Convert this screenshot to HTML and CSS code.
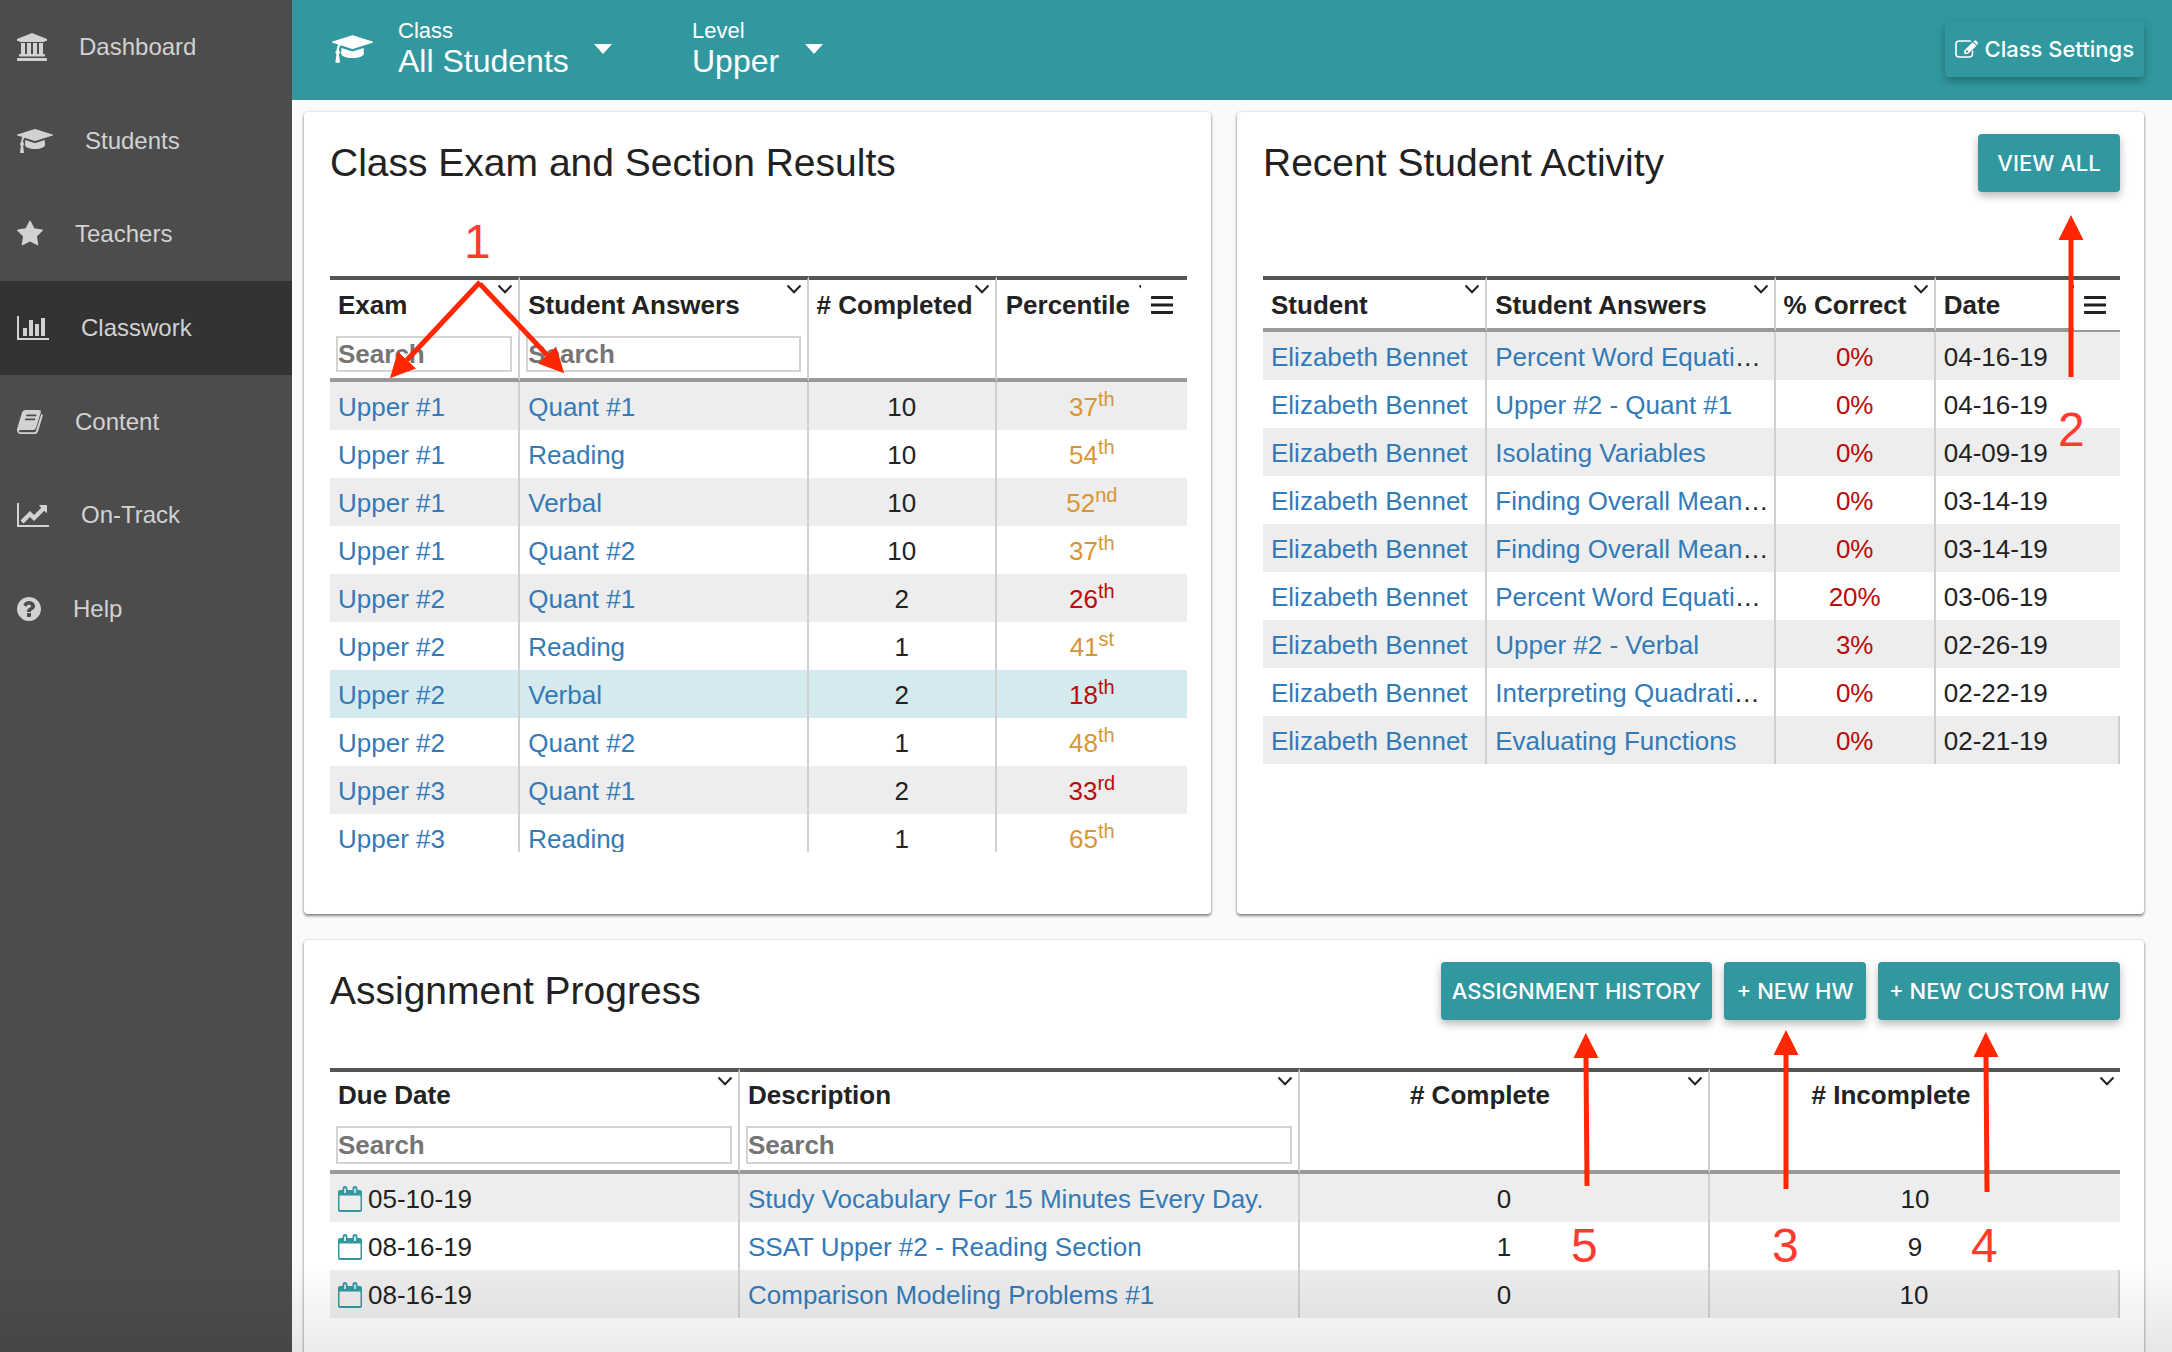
FILE: index.html
```
<!DOCTYPE html>
<html lang="en">
<head>
<meta charset="utf-8">
<title>Classwork</title>
<link rel="stylesheet" href="styles.css">
</head>
<body>
<svg class="sprite" aria-hidden="true">
  <symbol id="cap" viewBox="0 0 2304 1792"><path d="M1774 836l18 316q4 69-82 128t-235 93.5-323 34.5-323-34.5-235-93.5-82-128l18-316 574 181q22 7 48 7t48-7zm530-324q0 23-22 31l-1120 352q-4 1-10 1t-10-1l-652-206q-43 34-71 111.5t-34 178.5q63 36 63 109 0 69-58 107l58 433q2 14-8 25-9 11-24 11h-192q-15 0-24-11-10-11-8-25l58-433q-58-38-58-107 0-73 65-111 11-207 98-330l-333-104q-22-8-22-31t22-31l1120-352q4-1 10-1t10 1l1120 352q22 8 22 31z"/></symbol>
  <symbol id="chevron" viewBox="0 0 16 10"><path d="M1.500 1.500L8 8.200L14.500 1.500" fill="none" stroke="#222" stroke-width="2"/></symbol>
  <symbol id="caret" viewBox="0 0 18 10"><path d="M0 0h18l-9 10z"/></symbol>
  <symbol id="menu" viewBox="0 0 22 18"><path d="M1 0h20a1 1 0 0 1 1 1v2H0V1a1 1 0 0 1 1-1zM0 7.500h22v3H0zM0 15h22v2a1 1 0 0 1-1 1H1a1 1 0 0 1-1-1z"/></symbol>
  <symbol id="calendar" viewBox="0 0 24 26"><path fill-rule="evenodd" d="M2 4h2.500V2.500a2.500 2.500 0 0 1 5 0V4h5V2.500a2.500 2.500 0 0 1 5 0V4H22a2 2 0 0 1 2 2v18a2 2 0 0 1-2 2H2a2 2 0 0 1-2-2V6a2 2 0 0 1 2-2zM1.500 9.500v14.500h21V9.500zM6.200 2.500v4.500h1.600v-4.500zM16.200 2.500v4.500h1.600v-4.500z"/></symbol>
</svg>

<div class="app">
  <nav class="sidebar">
    <ul class="nav">
      <li><a class="nav-link" href="#"><svg width="30" height="28" viewBox="0 0 30 28"><path d="M15 0L30 6v2h-2q0 1-1.200 1H3.200Q2 9 2 8H0V6zM4 10h4v11h2V10h4v11h2V10h4v11h2V10h4v11h.8q1.200 0 1.200 1v1.500H2V22q0-1 1.200-1H4zM1.200 25h27.600q1.200 0 1.200 1v2H0v-2q0-1 1.200-1z"/></svg>Dashboard</a></li>
      <li><a class="nav-link" href="#"><svg width="36" height="28"><use href="#cap"/></svg>Students</a></li>
      <li><a class="nav-link" href="#"><svg width="26" height="28" viewBox="64 0 1664 1792"><path d="M1728 647q0 22-26 48l-363 354 86 500q1 7 1 20 0 21-10.500 35.500t-30.500 14.500q-19 0-40-12l-449-236-449 236q-22 12-40 12-21 0-31.500-14.500t-10.500-35.500q0-6 2-20l86-500-364-354q-25-27-25-48 0-37 56-46l502-73 225-455q19-41 49-41t49 41l225 455 502 73q56 9 56 46z"/></svg>Teachers</a></li>
      <li><a class="nav-link active" href="#" aria-current="page"><svg width="32" height="28" viewBox="0 0 2048 1792"><path d="M640 896v512h-256v-512h256zm384-512v1024h-256v-1024h256zm1024 1152v128h-2048v-1536h128v1408h1920zm-640-896v768h-256v-768h256zm384-384v1152h-256v-1152h256z"/></svg>Classwork</a></li>
      <li><a class="nav-link" href="#"><svg width="26" height="28" viewBox="0 0 26 28"><path fill-rule="evenodd" d="M8 2h14q2.500 0 1.800 2.500L19 20q-.6 2-2.800 2H4q-1.800 0-2 .8Q1.600 24.200 4 24.200h13.200q1.300 0 1.700-1.200L24.300 6q1.800.5 1.400 2L20.800 24q-.7 2-2.800 2H4Q.6 26 0 22.500q-.2-1 .2-2L5 4.500Q5.800 2 8 2zM9.600 6.500L9 8.300h10l.6-1.800zM8.400 10.500l-.6 1.800h10l.6-1.800z"/></svg>Content</a></li>
      <li><a class="nav-link" href="#"><svg width="32" height="28" viewBox="0 0 2048 1792"><path d="M2048 1536v128h-2048v-1536h128v1408h1920zm-128-1248v435q0 21-19.500 29.500t-35.500-7.500l-121-121-633 633q-10 10-23 10t-23-10l-233-233-416 416-192-192 585-585q10-10 23-10t23 10l233 233 464-464-121-121q-16-16-7.500-35.500t29.500-19.500h435q14 0 23 9t9 23z"/></svg>On-Track</a></li>
      <li><a class="nav-link" href="#"><svg width="24" height="28" viewBox="128 0 1536 1792"><path d="M1024 1376v-192q0-14-9-23t-23-9h-192q-14 0-23 9t-9 23v192q0 14 9 23t23 9h192q14 0 23-9t9-23zm256-672q0-88-55.500-163t-138.500-116-170-41q-243 0-371 213-15 24 8 42l132 100q7 6 19 6 16 0 25-12 53-68 86-92 34-24 86-24 48 0 85.500 26t37.500 59q0 38-20 61t-68 45q-63 28-115.500 86.500t-52.500 125.500v36q0 14 9 23t23 9h192q14 0 23-9t9-23q0-19 21.500-49.500t54.500-49.500q32-18 49-28.500t46-35 44.500-48 28-60.500 12.500-81zm384 192q0 209-103 385.500t-279.500 279.500-385.500 103-385.500-103-279.500-279.500-103-385.500 103-385.500 279.500-279.500 385.500-103 385.500 103 279.500 279.500 103 385.500z"/></svg>Help</a></li>
    </ul>
  </nav>

  <div class="page">
    <header class="topbar">
      <svg class="topbar-icon" width="41" height="32"><use href="#cap"/></svg>
      <div class="picker">
        <div class="picker-field">
          <label for="class-select">Class</label>
          <select id="class-select"><option>All Students</option></select>
        </div>
        <svg width="18" height="10"><use href="#caret"/></svg>
      </div>
      <div class="picker">
        <div class="picker-field">
          <label for="level-select">Level</label>
          <select id="level-select"><option>Upper</option></select>
        </div>
        <svg width="18" height="10"><use href="#caret"/></svg>
      </div>
      <button class="btn btn-settings" type="button"><svg width="23" height="18" viewBox="0 0 23 18"><path d="M17.500 10.500v3.200q0 3.300-3.300 3.300H4.300Q1 17 1 13.700V4.300Q1 1 4.300 1h9.900q1 0 1.800.4" fill="none" stroke="#fff" stroke-width="1.600"/><path fill-rule="evenodd" d="M17.800 2.200l3.600 3.600-8.600 8.200H9.200v-3.400zM11 10.800v1.600h1.600l.9-.9-1.600-1.600zM18.500 1.500l.8-.8q.9-.9 1.800 0l1.600 1.600q.9.900 0 1.800l-.8.800z"/></svg>Class Settings</button>
    </header>

    <main class="content">
      <div class="card-row">
        <section class="card">
          <div class="card-head"><h2>Class Exam and Section Results</h2></div>
          <div class="grid-wrap grid-scroll">
            <table class="grid">
              <colgroup><col class="w-190"><col class="w-288"><col class="w-188"><col class="w-190"></colgroup>
              <thead><tr>
                <th><span>Exam</span><svg class="chev"><use href="#chevron"/></svg><input type="text" placeholder="Search" aria-label="Search exam"></th>
                <th><span>Student Answers</span><svg class="chev"><use href="#chevron"/></svg><input type="text" placeholder="Search" aria-label="Search student answers"></th>
                <th class="num"><span># Completed</span><svg class="chev"><use href="#chevron"/></svg></th>
                <th class="num"><span>Percentile</span><svg class="chev chev-menu"><use href="#chevron"/></svg></th>
              </tr></thead>
              <tbody>
                <tr><td><a href="#">Upper #1</a></td><td><a href="#">Quant #1</a></td><td class="num">10</td><td class="num mid">37<sup>th</sup></td></tr>
                <tr><td><a href="#">Upper #1</a></td><td><a href="#">Reading</a></td><td class="num">10</td><td class="num mid">54<sup>th</sup></td></tr>
                <tr><td><a href="#">Upper #1</a></td><td><a href="#">Verbal</a></td><td class="num">10</td><td class="num mid">52<sup>nd</sup></td></tr>
                <tr><td><a href="#">Upper #1</a></td><td><a href="#">Quant #2</a></td><td class="num">10</td><td class="num mid">37<sup>th</sup></td></tr>
                <tr><td><a href="#">Upper #2</a></td><td><a href="#">Quant #1</a></td><td class="num">2</td><td class="num low">26<sup>th</sup></td></tr>
                <tr><td><a href="#">Upper #2</a></td><td><a href="#">Reading</a></td><td class="num">1</td><td class="num mid">41<sup>st</sup></td></tr>
                <tr class="hovered"><td><a href="#">Upper #2</a></td><td><a href="#">Verbal</a></td><td class="num">2</td><td class="num low">18<sup>th</sup></td></tr>
                <tr><td><a href="#">Upper #2</a></td><td><a href="#">Quant #2</a></td><td class="num">1</td><td class="num mid">48<sup>th</sup></td></tr>
                <tr><td><a href="#">Upper #3</a></td><td><a href="#">Quant #1</a></td><td class="num">2</td><td class="num low">33<sup>rd</sup></td></tr>
                <tr><td><a href="#">Upper #3</a></td><td><a href="#">Reading</a></td><td class="num">1</td><td class="num mid">65<sup>th</sup></td></tr>
              </tbody>
            </table>
            <button class="grid-menu" type="button" aria-label="Table menu"><svg width="22" height="18"><use href="#menu"/></svg></button>
          </div>
        </section>

        <section class="card">
          <div class="card-head"><h2>Recent Student Activity</h2><button class="btn" type="button">VIEW ALL</button></div>
          <div class="grid-wrap">
            <table class="grid grid-full">
              <colgroup><col class="w-224"><col class="w-288"><col class="w-160"><col class="w-184"></colgroup>
              <thead><tr>
                <th><span>Student</span><svg class="chev"><use href="#chevron"/></svg></th>
                <th><span>Student Answers</span><svg class="chev"><use href="#chevron"/></svg></th>
                <th class="num"><span>% Correct</span><svg class="chev"><use href="#chevron"/></svg></th>
                <th><span>Date</span><svg class="chev chev-menu"><use href="#chevron"/></svg></th>
              </tr></thead>
              <tbody>
                <tr><td><a href="#">Elizabeth Bennet</a></td><td><a href="#">Percent Word Equations</a></td><td class="num low">0%</td><td>04-16-19</td></tr>
                <tr><td><a href="#">Elizabeth Bennet</a></td><td><a href="#">Upper #2 - Quant #1</a></td><td class="num low">0%</td><td>04-16-19</td></tr>
                <tr><td><a href="#">Elizabeth Bennet</a></td><td><a href="#">Isolating Variables</a></td><td class="num low">0%</td><td>04-09-19</td></tr>
                <tr><td><a href="#">Elizabeth Bennet</a></td><td><a href="#">Finding Overall Meaning</a></td><td class="num low">0%</td><td>03-14-19</td></tr>
                <tr><td><a href="#">Elizabeth Bennet</a></td><td><a href="#">Finding Overall Meaning</a></td><td class="num low">0%</td><td>03-14-19</td></tr>
                <tr><td><a href="#">Elizabeth Bennet</a></td><td><a href="#">Percent Word Equations</a></td><td class="num low">20%</td><td>03-06-19</td></tr>
                <tr><td><a href="#">Elizabeth Bennet</a></td><td><a href="#">Upper #2 - Verbal</a></td><td class="num low">3%</td><td>02-26-19</td></tr>
                <tr><td><a href="#">Elizabeth Bennet</a></td><td><a href="#">Interpreting Quadratic Equations</a></td><td class="num low">0%</td><td>02-22-19</td></tr>
                <tr><td><a href="#">Elizabeth Bennet</a></td><td><a href="#">Evaluating Functions</a></td><td class="num low">0%</td><td>02-21-19</td></tr>
              </tbody>
            </table>
            <button class="grid-menu" type="button" aria-label="Table menu"><svg width="22" height="18"><use href="#menu"/></svg></button>
          </div>
        </section>
      </div>

      <section class="card card-assignments">
        <div class="card-head">
          <h2>Assignment Progress</h2>
          <button class="btn" type="button">ASSIGNMENT HISTORY</button>
          <button class="btn" type="button">+ NEW HW</button>
          <button class="btn" type="button">+ NEW CUSTOM HW</button>
        </div>
        <table class="grid grid-full">
          <colgroup><col class="w-410"><col class="w-560"><col class="w-410"><col class="w-410"></colgroup>
          <thead><tr>
            <th><span>Due Date</span><svg class="chev"><use href="#chevron"/></svg><input type="text" placeholder="Search" aria-label="Search due date"></th>
            <th><span>Description</span><svg class="chev"><use href="#chevron"/></svg><input type="text" placeholder="Search" aria-label="Search description"></th>
            <th class="num"><span># Complete</span><svg class="chev"><use href="#chevron"/></svg></th>
            <th class="num"><span># Incomplete</span><svg class="chev"><use href="#chevron"/></svg></th>
          </tr></thead>
          <tbody>
            <tr><td><svg class="cal"><use href="#calendar"/></svg>05-10-19</td><td><a href="#">Study Vocabulary For 15 Minutes Every Day.</a></td><td class="num">0</td><td class="num">10</td></tr>
            <tr><td><svg class="cal"><use href="#calendar"/></svg>08-16-19</td><td><a href="#">SSAT Upper #2 - Reading Section</a></td><td class="num">1</td><td class="num">9</td></tr>
            <tr><td><svg class="cal"><use href="#calendar"/></svg>08-16-19</td><td><a href="#">Comparison Modeling Problems #1</a></td><td class="num">0</td><td class="num">10</td></tr>
          </tbody>
        </table>
      </section>
    </main>
  </div>

  <div class="fade"></div>

  <svg class="callouts">
    <defs>
      <marker id="head" markerUnits="userSpaceOnUse" markerWidth="26" markerHeight="26" refX="0" refY="13" orient="auto"><path d="M0 0.500L25 13L0 25.500z" fill="#ff2600"/></marker>
    </defs>
    <g stroke="#ff2600" stroke-width="5">
      <path d="M480 282L407 360" marker-end="url(#head)"/>
      <path d="M480 284L547 355" marker-end="url(#head)"/>
      <path d="M2071 377V240" marker-end="url(#head)"/>
      <path d="M1587 1186L1586 1058" marker-end="url(#head)"/>
      <path d="M1786 1189V1055" marker-end="url(#head)"/>
      <path d="M1987 1192L1986 1057" marker-end="url(#head)"/>
    </g>
    <g class="callout-number">
      <text x="464" y="258">1</text>
      <text x="2058" y="446">2</text>
      <text x="1571" y="1262">5</text>
      <text x="1772" y="1262">3</text>
      <text x="1971" y="1262">4</text>
    </g>
  </svg>
</div>
</body>
</html>
```
FILE: styles.css
```
* { box-sizing: border-box; }

body {
  margin: 0;
  background: #fafafa;
  color: #222;
  font-family: "Liberation Sans", Arial, sans-serif;
  font-size: 26px;
}

a { color: #337ab7; text-decoration: none; }

.sprite { display: none; }

.app {
  position: relative;
  display: grid;
  grid-template-columns: 292px minmax(0, 1fr);
  min-height: 100vh;
}

/* Sidebar */
.sidebar { background: #4c4c4c; }

.nav {
  display: grid;
  grid-template-rows: repeat(7, 1fr);
  height: 656px;
  margin: 0;
  padding: 0;
  list-style: none;
}

.nav-link {
  display: flex;
  align-items: center;
  gap: 32px;
  height: 100%;
  padding-left: 17px;
  color: #d2d2d2;
  fill: #d2d2d2;
  font-size: 24px;
}

.nav-link.active { background: #333; }

/* Top bar */
.page { display: flex; flex-direction: column; }

.topbar {
  display: flex;
  align-items: center;
  height: 100px;
  padding: 0 28px 3px 40px;
  background: #31989f;
  color: #fff;
  fill: #fff;
}

.topbar-icon { margin-right: 25px; }

.picker {
  display: flex;
  align-items: center;
  gap: 25px;
  margin-right: 80px;
}

.picker-field { display: flex; flex-direction: column; }

.picker label { font-size: 22px; line-height: 24px; }

.picker select {
  appearance: none;
  margin: 0;
  padding: 0;
  border: 0;
  background: none;
  color: inherit;
  font: inherit;
  font-size: 32px;
  line-height: 36px;
}

.btn {
  display: flex;
  align-items: center;
  justify-content: center;
  gap: 7px;
  min-width: 142px;
  height: 58px;
  padding: 0 11px;
  border: 0;
  border-radius: 4px;
  background: #31989f;
  box-shadow: 0 4px 8px rgba(0, 0, 0, .28);
  color: #fff;
  fill: #fff;
  font: 500 22px Inter, "Liberation Sans", sans-serif;
  white-space: nowrap;
}

.btn-settings { height: 56px; margin-left: auto; padding: 0 10px; }

/* Cards */
.content {
  display: flex;
  flex: 1;
  flex-direction: column;
  gap: 26px;
  padding: 12px 28px 0 12px;
}

.card-row {
  display: grid;
  grid-template-columns: repeat(2, minmax(0, 1fr));
  gap: 26px;
}

.card {
  padding: 22px 24px 62px 26px;
  border-radius: 4px;
  background: #fff;
  box-shadow: 0 2px 3px rgba(0, 0, 0, .45), 0 0 3px rgba(0, 0, 0, .15);
}

.card-assignments { flex: 1; padding-bottom: 34px; border-radius: 4px 4px 0 0; }

.card-head {
  display: flex;
  align-items: center;
  gap: 12px;
  height: 58px;
  margin-bottom: 84px;
}

.card-assignments .card-head { margin-bottom: 48px; }

.card-head h2 {
  flex: 1;
  margin: 0;
  font-size: 39px;
  font-weight: 400;
}

/* Data grids */
.grid-wrap { position: relative; }

.grid-scroll {
  height: 576px;
  overflow-y: auto;
  scrollbar-width: none;
}

.grid {
  width: 100%;
  border-spacing: 0;
  table-layout: fixed;
}

.w-160 { width: 160px; }
.w-184 { width: 184px; }
.w-188 { width: 188px; }
.w-190 { width: 190px; }
.w-224 { width: 224px; }
.w-288 { width: 288px; }
.w-410 { width: 410px; }
.w-560 { width: 560px; }

.grid th {
  position: relative;
  padding: 0 6px;
  border-top: 4px solid #555;
  border-bottom: 4px solid #999;
  text-align: left;
  vertical-align: top;
}

.grid th span {
  display: block;
  padding: 2px 50px 0 2px;
  line-height: 46px;
  white-space: nowrap;
}

.grid th.num span { text-align: center; }

.grid th:not(:last-child),
.grid td:not(:last-child) { border-right: 2px solid #d0d0d0; }

.grid-full tbody tr:last-child td:last-child { border-right: 2px solid #d0d0d0; }

.grid th input {
  display: block;
  width: 100%;
  height: 36px;
  margin: 8px 0 6px;
  padding: 0;
  border: 2px solid #d3d3d3;
  background: #fff;
  font: inherit;
}

.grid th input::placeholder { color: #757575; }

.card-assignments .grid th span { padding-top: 0; }
.card-assignments .grid th input { height: 38px; }

.grid td {
  height: 48px;
  padding: 2px 4px 0 8px;
  overflow: hidden;
  line-height: 46px;
  text-overflow: ellipsis;
  white-space: nowrap;
}

.grid td.num { padding-right: 8px; }

.grid tbody tr:nth-child(odd) { background: #ededed; }
.grid tbody tr.hovered { background: #d4eaee; }

.grid .num { text-align: center; }
.grid .mid { color: #d99532; }
.grid .low { color: #bb0a0a; }

.grid sup {
  font-size: 20px;
  line-height: 0;
  vertical-align: 10px;
}

.chev {
  position: absolute;
  top: 4px;
  right: 5px;
  width: 16px;
  height: 10px;
}

.chev-menu { right: 33px; }

.grid-menu {
  position: absolute;
  top: 4px;
  right: 0;
  width: 46px;
  height: 50px;
  padding: 0 4px 0 0;
  border: 0;
  background: #fff;
  fill: #222;
}

.grid-menu svg { display: block; margin: 0 auto; }

.cal {
  width: 24px;
  height: 26px;
  margin-right: 6px;
  fill: #31989f;
  vertical-align: -4px;
}

/* Shading along the bottom edge of the window */
.fade {
  position: absolute;
  right: 0;
  bottom: 0;
  left: 0;
  height: 90px;
  background: linear-gradient(transparent, rgba(0, 0, 0, .08));
  pointer-events: none;
}

/* Numbered arrows over the page */
.callouts {
  position: absolute;
  inset: 0;
  width: 100%;
  height: 100%;
  pointer-events: none;
}

.callout-number { fill: #ff3b30; font-size: 48px; }
```
